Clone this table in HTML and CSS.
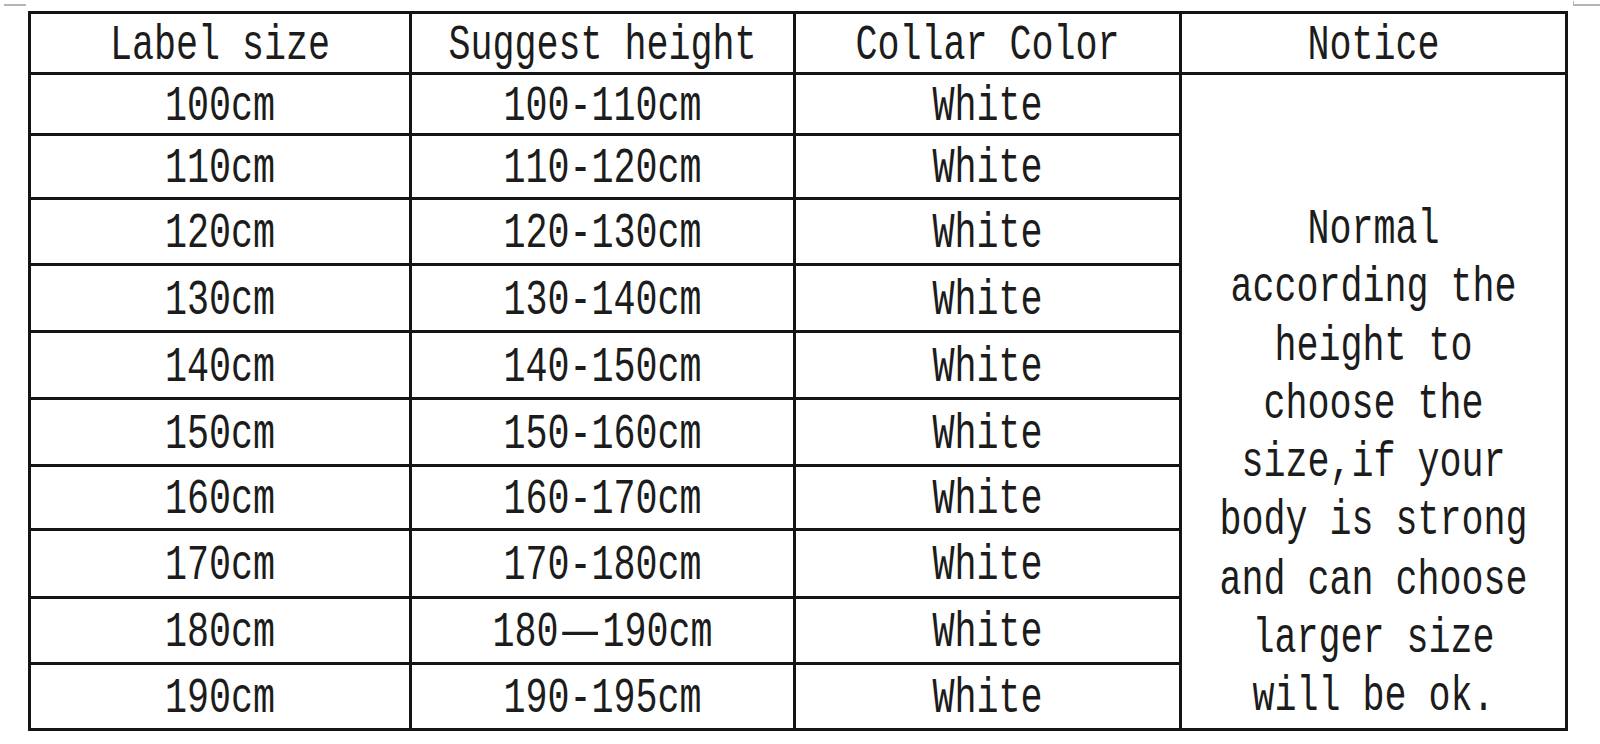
FILE: index.html
```html
<!DOCTYPE html>
<html lang="en">
<head>
<meta charset="utf-8">
<title>Size chart</title>
<link rel="stylesheet" href="styles.css">
</head>
<body>
<div class="chart">
  <div class="cell head"><span class="t">Label size</span></div>
  <div class="cell head"><span class="t">Suggest height</span></div>
  <div class="cell head"><span class="t">Collar Color</span></div>
  <div class="cell head"><span class="t">Notice</span></div>

  <div class="cell"><span class="t">100cm</span></div><div class="cell"><span class="t">100-110cm</span></div><div class="cell"><span class="t">White</span></div>
  <div class="cell notice"><span class="t notice-text">Normal<br>according the<br>height to<br>choose the<br>size,if your<br>body is strong<br>and can choose<br>larger size<br>will be ok.</span></div>
  <div class="cell"><span class="t">110cm</span></div><div class="cell"><span class="t">110-120cm</span></div><div class="cell"><span class="t">White</span></div>
  <div class="cell"><span class="t">120cm</span></div><div class="cell"><span class="t">120-130cm</span></div><div class="cell"><span class="t">White</span></div>
  <div class="cell"><span class="t">130cm</span></div><div class="cell"><span class="t">130-140cm</span></div><div class="cell"><span class="t">White</span></div>
  <div class="cell"><span class="t">140cm</span></div><div class="cell"><span class="t">140-150cm</span></div><div class="cell"><span class="t">White</span></div>
  <div class="cell"><span class="t">150cm</span></div><div class="cell"><span class="t">150-160cm</span></div><div class="cell"><span class="t">White</span></div>
  <div class="cell"><span class="t">160cm</span></div><div class="cell"><span class="t">160-170cm</span></div><div class="cell"><span class="t">White</span></div>
  <div class="cell"><span class="t">170cm</span></div><div class="cell"><span class="t">170-180cm</span></div><div class="cell"><span class="t">White</span></div>
  <div class="cell"><span class="t">180cm</span></div><div class="cell"><span class="t">180<span class="dash"><span class="dash-glyph">—</span></span>190cm</span></div><div class="cell"><span class="t">White</span></div>
  <div class="cell"><span class="t">190cm</span></div><div class="cell"><span class="t">190-195cm</span></div><div class="cell"><span class="t">White</span></div>

  <span class="mark mark-tl"></span>
  <span class="mark mark-tr"></span>
  <span class="mark mark-br"></span>
</div>
</body>
</html>
```

FILE: styles.css
```css
html, body {
  margin: 0;
  background: #ffffff;
}
body {
  padding: 11px 0 0 28px;
  font-family: "Liberation Mono", "Courier New", monospace;
  color: #1c1c1c;
}
.chart {
  position: relative;
  display: grid;
  grid-template-columns: 381px 384px 386px 386px;
  grid-template-rows: 61px 61px 64px 66px 67px 67px 67px 64px 68px 66px 66px;
  width: max-content;
  border-left: 3px solid #141414;
  border-top: 3px solid #141414;
}
.cell {
  display: flex;
  align-items: center;
  justify-content: center;
  padding-top: 6px;
  border-right: 3px solid #141414;
  border-bottom: 3px solid #141414;
  font-size: 36.7px;
  line-height: 1;
  white-space: nowrap;
}
.t {
  display: inline-block;
  transform: scaleY(1.35);
}
.notice {
  grid-column: 4;
  grid-row: 2 / 12;
  align-items: flex-start;
  padding-top: 126px;
  text-align: center;
}
.notice-text {
  line-height: 43.3px;
  transform-origin: top center;
}
.dash {
  display: inline-block;
  width: 2ch;
  text-align: center;
}
.dash-glyph {
  display: inline-block;
  transform: scaleX(1.6);
}
.mark {
  position: absolute;
  border-color: #b5b5b5;
  border-style: solid;
  border-width: 0;
}
.mark-tl {
  left: -27px;
  top: -13px;
  width: 22px;
  height: 3px;
  border-bottom-width: 2px;
}
.mark-tr {
  right: -32px;
  top: -13px;
  width: 26px;
  height: 3px;
  border-left-width: 1px;
  border-bottom-width: 2px;
}
.mark-br {
  right: -24px;
  bottom: -14px;
  width: 14px;
  height: 12px;
  border-top-width: 2px;
  border-left-width: 2px;
  border-right-width: 2px;
}
```
